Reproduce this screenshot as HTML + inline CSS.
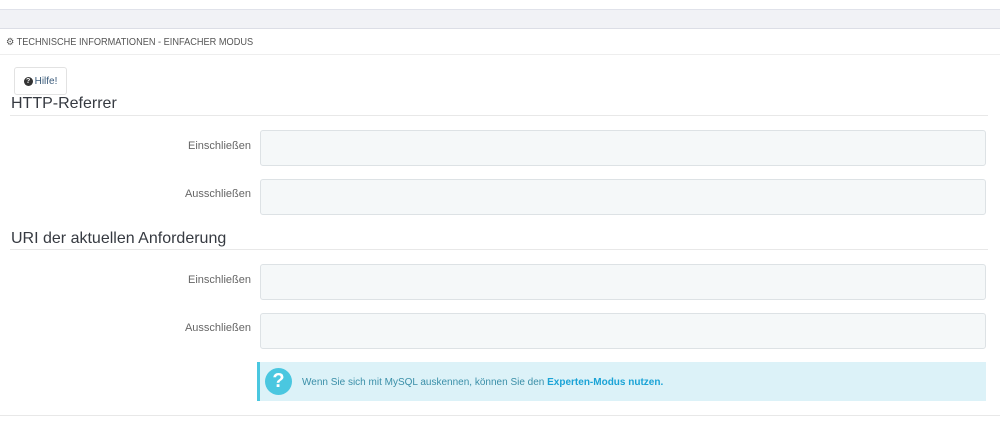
<!DOCTYPE html><html><head><style>
body{margin:0;width:1000px;height:422px;background:#fff;font-family:"Liberation Sans",sans-serif;position:relative;overflow:hidden;color:#555}
.a{position:absolute}
.inp{position:absolute;left:260px;width:724px;height:34px;background:#f5f8f9;border:1px solid #dde2e5;border-radius:3px}
.lbl{position:absolute;right:749px;font-size:11px;color:#666}
h3{position:absolute;margin:0;font-weight:normal;font-size:16px;color:#363a41}
.ul{position:absolute;left:10px;width:978px;height:1px;background:#e8e8e8}
</style></head><body>
<div class="a" style="left:0;top:9px;width:1000px;height:18px;background:#f1f2f6;border-top:1px solid #e0e2ea;border-bottom:1px solid #dcdee6"></div>
<div class="a" style="left:6px;top:37px;font-size:10px;color:#555;transform:scaleX(0.92);transform-origin:0 0;white-space:nowrap">⚙ TECHNISCHE INFORMATIONEN - EINFACHER MODUS</div>
<div class="a" style="left:0;top:54px;width:1000px;height:1px;background:#eee"></div>
<div class="a" style="left:14px;top:67px;width:51px;height:26px;border:1px solid #e2e2e2;border-radius:3px;font-size:10px;color:#3a5a7a;display:flex;align-items:center;justify-content:center;gap:2px"><span style="display:inline-block;width:9px;height:9px;border-radius:50%;background:#333;color:#fff;font-size:7px;line-height:9px;font-weight:bold;text-align:center">?</span>Hilfe!</div>
<h3 style="left:11px;top:95px">HTTP-Referrer</h3>
<div class="ul" style="top:115px"></div>
<div class="lbl" style="top:140px">Einschließen</div><div class="inp" style="top:130px"></div>
<div class="lbl" style="top:188px">Ausschließen</div><div class="inp" style="top:179px"></div>
<h3 style="left:11px;top:230px">URI der aktuellen Anforderung</h3>
<div class="ul" style="top:249px"></div>
<div class="lbl" style="top:274px">Einschließen</div><div class="inp" style="top:264px"></div>
<div class="lbl" style="top:322px">Ausschließen</div><div class="inp" style="top:313px"></div>
<div class="a" style="left:257px;top:362px;width:729px;height:39px;background:#dcf2f8;border-left:3px solid #4ac7e0;box-sizing:border-box"></div>
<div class="a" style="left:265px;top:368px;width:27px;height:27px;border-radius:50%;background:#4ac7e0;color:#fff;font-weight:bold;font-size:20px;line-height:27px;text-align:center">?</div>
<div class="a" style="left:302px;top:377px;font-size:10px;color:#3a8fa8">Wenn Sie sich mit MySQL auskennen, können Sie den <b style="color:#1aa3d6">Experten-Modus nutzen.</b></div>
<div class="a" style="left:0;top:415px;width:1000px;height:1px;background:#e8e8e8"></div>
</body></html>
